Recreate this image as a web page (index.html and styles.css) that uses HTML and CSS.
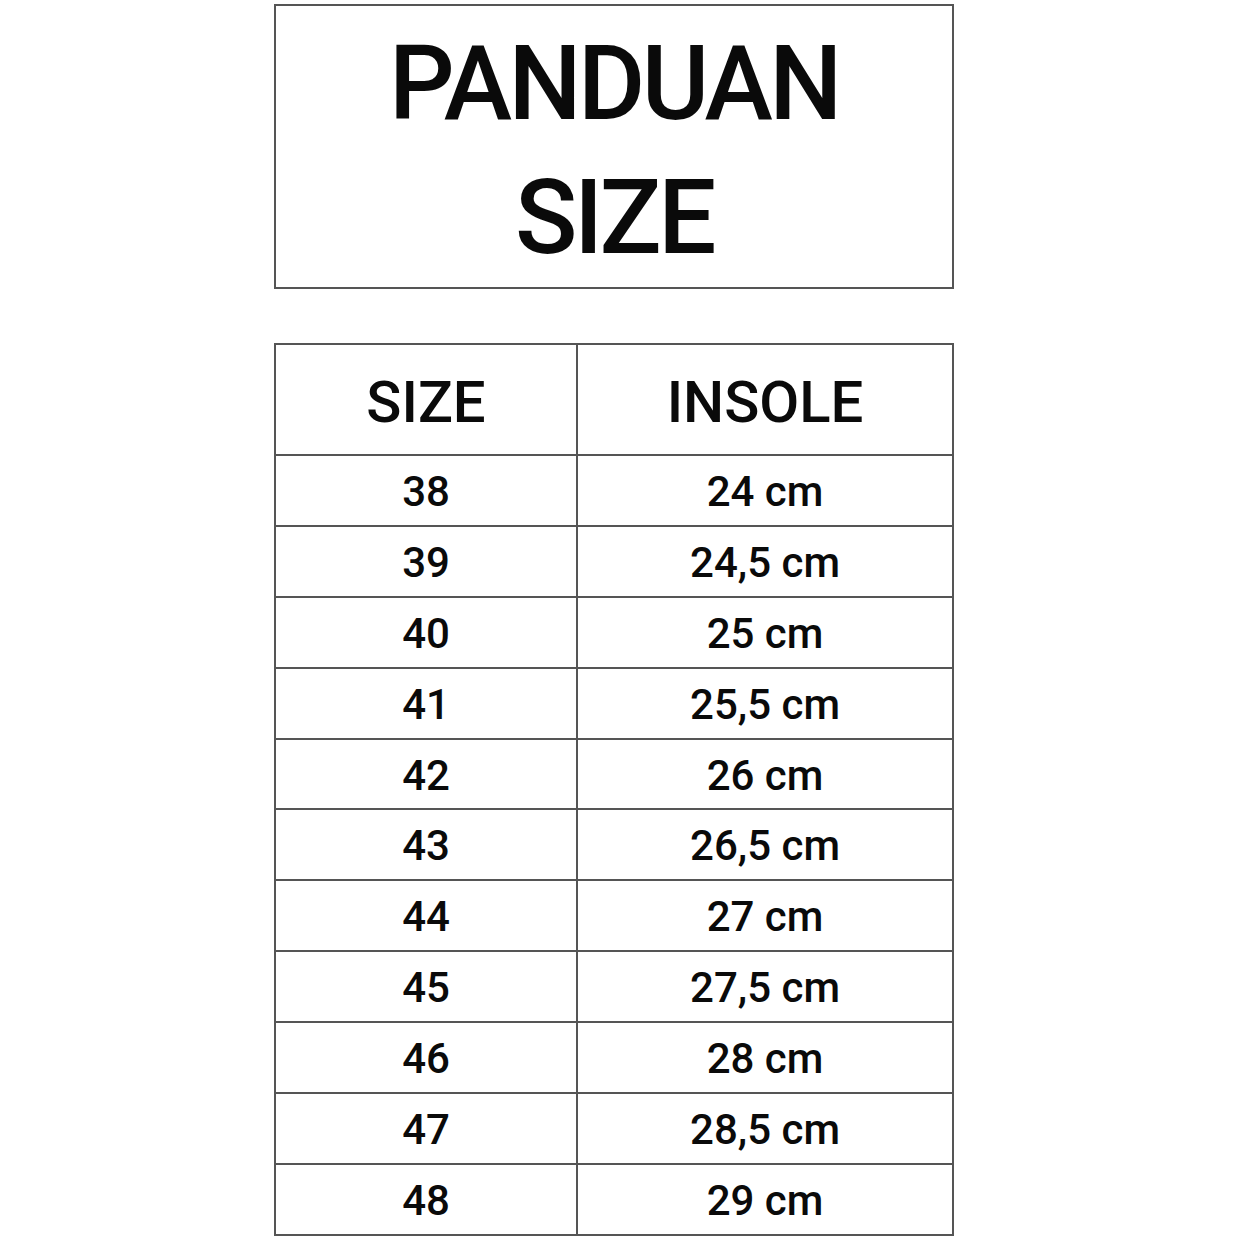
FILE: index.html
```html
<!DOCTYPE html>
<html>
<head>
<meta charset="utf-8">
<link rel="stylesheet" href="styles.css">
</head>
<body>
<div class="page">
  <div class="title-box">
    <div class="title">PANDUAN<br>SIZE</div>
  </div>
  <table class="size-table">
    <thead>
      <tr><th class="col-size">SIZE</th><th class="col-insole">INSOLE</th></tr>
    </thead>
    <tbody>
      <tr><td>38</td><td>24 cm</td></tr>
      <tr><td>39</td><td>24,5 cm</td></tr>
      <tr><td>40</td><td>25 cm</td></tr>
      <tr><td>41</td><td>25,5 cm</td></tr>
      <tr><td>42</td><td>26 cm</td></tr>
      <tr><td>43</td><td>26,5 cm</td></tr>
      <tr><td>44</td><td>27 cm</td></tr>
      <tr><td>45</td><td>27,5 cm</td></tr>
      <tr><td>46</td><td>28 cm</td></tr>
      <tr><td>47</td><td>28,5 cm</td></tr>
      <tr><td>48</td><td>29 cm</td></tr>
    </tbody>
  </table>
</div>
</body>
</html>
```
FILE: styles.css
```css
html, body {
  margin: 0;
  padding: 0;
  background: #ffffff;
}
body {
  font-family: Roboto, "Liberation Sans", sans-serif;
  color: #0a0a0a;
}
.page {
  width: 680px;
  margin-left: 274px;
  padding-top: 4px;
  display: flex;
  flex-direction: column;
  gap: 54px;
}
.title-box {
  box-sizing: border-box;
  height: 285px;
  border: 2px solid #555555;
  display: flex;
  align-items: center;
  justify-content: center;
}
.title {
  font-size: 103px;
  font-weight: 500;
  letter-spacing: -3.5px;
  line-height: 134px;
  text-align: center;
  padding-top: 8px;
}
.size-table {
  width: 680px;
  border-collapse: collapse;
  table-layout: fixed;
}
.size-table th, .size-table td {
  border: 2px solid #555555;
  text-align: center;
  padding: 0;
  font-weight: 500;
}
.col-size { width: 300px; }
.size-table th {
  height: 105px;
  font-size: 58px;
  padding-top: 4px;
}
.size-table td {
  height: 66.9px;
  font-size: 42px;
  padding-top: 2px;
}
```
